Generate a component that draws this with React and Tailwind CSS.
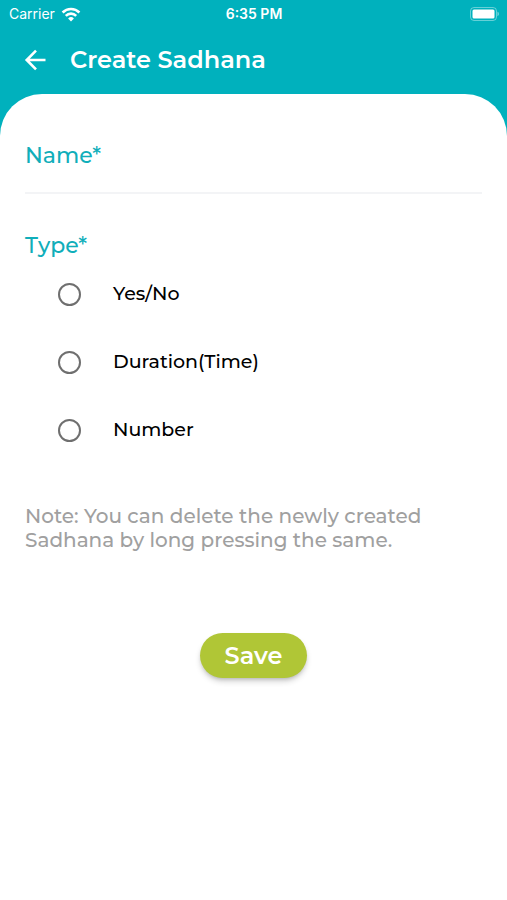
import { useState } from 'react'

const types = ['Yes/No', 'Duration(Time)', 'Number']

function StatusBar() {
    return (
        <div className="grid grid-cols-3 items-center h-7 pl-[9px] pr-2 text-sm font-['Inter',sans-serif]">
            <div className="flex items-center gap-1.5 font-normal">
                <span>Carrier</span>
                <svg width="20" height="15" viewBox="0 0 20 15" fill="none" stroke="currentColor" strokeWidth="2.6">
                    <path d="M1.6 5.5a12 12 0 0 1 16.8 0" />
                    <path d="M4.8 8.8a7.4 7.4 0 0 1 10.4 0" />
                    <path d="M10 14.4 7.1 11.4a4.1 4.1 0 0 1 5.8 0Z" fill="currentColor" stroke="none" />
                </svg>
            </div>
            <span className="text-center font-semibold">6:35 PM</span>
            <svg className="justify-self-end" width="30" height="14" viewBox="0 0 30 14">
                <rect x="1.5" y="0.5" width="26" height="13" rx="3.5" fill="none" stroke="white" strokeOpacity="0.4" />
                <rect x="3.5" y="2.5" width="22" height="9" rx="1.5" fill="white" />
                <path d="M28.5 4.8c1.8.6 1.8 3.8 0 4.4Z" fill="white" fillOpacity="0.5" />
            </svg>
        </div>
    )
}

export default function App() {
    const [name, setName] = useState('')
    const [type, setType] = useState('')

    return (
        <div className="flex flex-col min-h-screen bg-[#00b1bd] font-['Montserrat','Inter',sans-serif] font-medium">
            <header className="text-white">
                <StatusBar />
                <div className="flex items-center gap-6 h-16 px-6">
                    <button type="button" aria-label="Back">
                        <svg width="22" height="22" viewBox="0 0 22 22" fill="none" stroke="currentColor" strokeWidth="2.6">
                            <path d="M21.5 11H3M12 1.7 2.7 11l9.3 9.3" />
                        </svg>
                    </button>
                    <h1 className="text-2xl font-semibold">Create Sadhana</h1>
                </div>
            </header>

            <form
                className="flex flex-col flex-1 mt-0.5 px-[25px] pt-12 bg-white rounded-t-[42px]"
                onSubmit={(e) => e.preventDefault()}
            >
                <label htmlFor="name" className="text-[22px] leading-7 text-[#10aeba]">Name*</label>
                <input
                    id="name"
                    className="h-6 border-b-2 border-gray-100 outline-none text-xl"
                    value={name}
                    onChange={(e) => setName(e.target.value)}
                />

                <fieldset className="mt-[38px]">
                    <legend className="text-[22px] leading-7 text-[#10aeba]">Type*</legend>
                    {types.map((t) => (
                        <label key={t} className="flex items-center gap-8 h-[68px] pl-[33px] text-[19px] text-black">
                            <input
                                type="radio"
                                name="type"
                                className="appearance-none size-[23px] rounded-full border-2 border-[#6f6f6f] checked:border-8 checked:border-[#00b1bd]"
                                checked={type === t}
                                onChange={() => setType(t)}
                            />
                            {t}
                        </label>
                    ))}
                </fieldset>

                <p className="mt-10 text-xl leading-6 text-[#a0a0a0]">
                    Note: You can delete the newly created Sadhana by long pressing the same.
                </p>

                <button
                    type="submit"
                    className="self-center mt-[81px] h-[45px] px-[25px] rounded-full bg-[#b0c636] text-2xl font-semibold text-white shadow-md shadow-black/20"
                >
                    Save
                </button>
            </form>
        </div>
    )
}
